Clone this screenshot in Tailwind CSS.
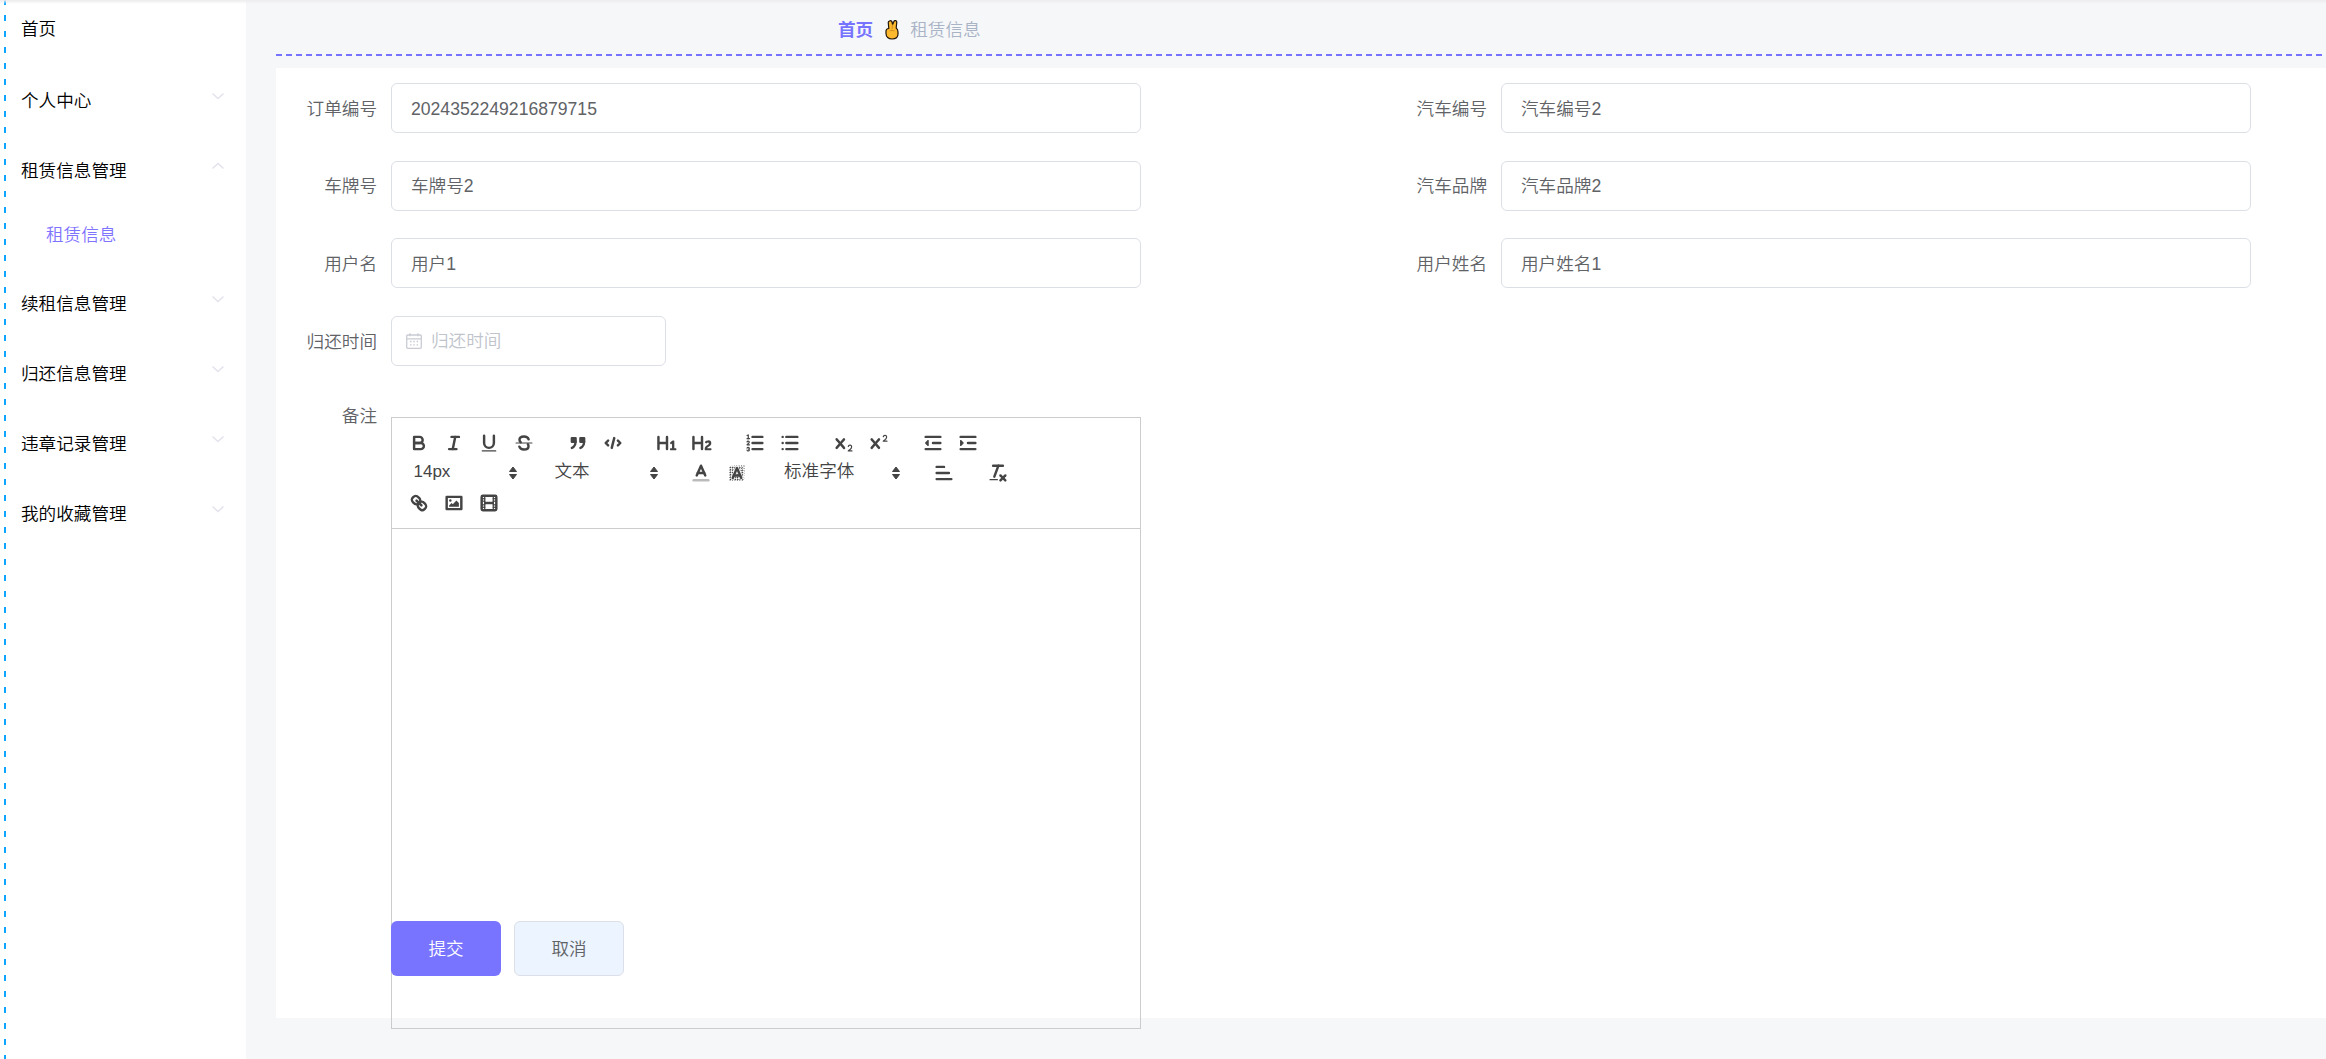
<!DOCTYPE html>
<html lang="zh-CN">
<head>
<meta charset="utf-8">
<title>租赁信息</title>
<script src="https://cdn.jsdelivr.net/npm/@tailwindcss/browser@4"></script>
</head>
<body class="m-0 overflow-hidden bg-[#f6f7f9] font-['Liberation_Sans','Noto_Sans_CJK_SC',sans-serif] text-[17.6px] font-[350]">
<div class="relative flex h-[1059px] w-[2326px] overflow-hidden">
  <div class="absolute inset-x-0 top-0 z-20 h-[4px] bg-linear-to-b from-[#ececee] to-transparent"></div>

  <!-- sidebar -->
  <aside class="relative h-full w-[246px] shrink-0 bg-white pl-[21px] text-black">
    <div class="absolute bottom-0 left-[4px] top-[-1px] w-[2px] bg-[repeating-linear-gradient(to_bottom,#0ea5ff_0,#0ea5ff_6px,transparent_6px,transparent_16px)]"></div>
    <div class="mb-[9px] flex h-[56px] items-center"><span class="pt-[2px]">首页</span></div>
    <div class="flex h-[70px] items-center justify-between pr-[21px]"><span class="pt-[2px]">个人中心</span>
      <svg class="-mt-[8px]" width="14" height="8" viewBox="0 0 14 8" fill="none" stroke="#e3e3ee" stroke-width="1.5"><path d="M1.5 1.5 7 6.5l5.500-5"/></svg></div>
    <div class="flex h-[70px] items-center justify-between pr-[21px]"><span class="pt-[2px]">租赁信息管理</span>
      <svg class="-mt-[8px]" width="14" height="8" viewBox="0 0 14 8" fill="none" stroke="#e3e3ee" stroke-width="1.5"><path d="M1.5 6.500 7 1.500l5.500 5"/></svg></div>
    <div class="mb-[5px] flex h-[58px] items-center pl-[25px] text-[#7f74ff]"><span class="pt-[2px]">租赁信息</span></div>
    <div class="flex h-[70px] items-center justify-between pr-[21px]"><span class="pt-[2px]">续租信息管理</span>
      <svg class="-mt-[8px]" width="14" height="8" viewBox="0 0 14 8" fill="none" stroke="#e3e3ee" stroke-width="1.5"><path d="M1.5 1.5 7 6.5l5.500-5"/></svg></div>
    <div class="flex h-[70px] items-center justify-between pr-[21px]"><span class="pt-[2px]">归还信息管理</span>
      <svg class="-mt-[8px]" width="14" height="8" viewBox="0 0 14 8" fill="none" stroke="#e3e3ee" stroke-width="1.5"><path d="M1.5 1.5 7 6.5l5.500-5"/></svg></div>
    <div class="flex h-[70px] items-center justify-between pr-[21px]"><span class="pt-[2px]">违章记录管理</span>
      <svg class="-mt-[8px]" width="14" height="8" viewBox="0 0 14 8" fill="none" stroke="#e3e3ee" stroke-width="1.5"><path d="M1.5 1.5 7 6.5l5.500-5"/></svg></div>
    <div class="flex h-[70px] items-center justify-between pr-[21px]"><span class="pt-[2px]">我的收藏管理</span>
      <svg class="-mt-[8px]" width="14" height="8" viewBox="0 0 14 8" fill="none" stroke="#e3e3ee" stroke-width="1.5"><path d="M1.5 1.5 7 6.5l5.500-5"/></svg></div>
  </aside>

  <!-- main -->
  <main class="flex h-full min-w-0 flex-1 flex-col pl-[30px]">
    <div class="h-[68px] shrink-0">
      <div class="flex h-[54px] items-center pl-[562px] pt-[6px]">
        <span class="font-bold text-[#7674ff]">首页</span>
        <svg class="ml-[12px] mr-[11px]" width="14" height="20" viewBox="0 0 14 20"><path d="M4.500 1C5.500.4 6.800.8 7 2L7.600 4.500 9 1.200C9.600.2 11.800.4 11.800 2L11.200 8C12.500 9 13 10 13 12V14C13 17.500 10.500 19 7 19 3.500 19 1 17 1 13.500V11C1 9.500 2 8.700 3.800 8.500L3.300 3C3.100 2 3.700 1.300 4.500 1Z" fill="#fdb92e" stroke="#20160a" stroke-width="1.200" stroke-linejoin="round"/><path d="M4.500 11c1.500-.8 3.500-.8 5 0M7.600 4.500 7 9" fill="none" stroke="#c98d1a" stroke-width="1"/></svg>
        <span class="text-[#a9b3c6]">租赁信息</span>
      </div>
      <div class="h-[2px] bg-[repeating-linear-gradient(to_right,#7674ff_0,#7674ff_6px,transparent_6px,transparent_10px)]"></div>
    </div>

    <section class="h-[950px] shrink-0 bg-white pt-[15px]">
      <form class="grid grid-cols-[1110px_1fr] gap-y-[27.67px] text-[#606266]">
        <div class="flex h-[50px] items-center"><label class="w-[101px] pt-[2px] text-right">订单编号</label>
          <div class="ml-[14px] flex h-[50px] w-[750px] items-center rounded-[6px] border border-[#dcdfe6] pl-[19px] pt-[2px]">2024352249216879715</div></div>
        <div class="flex h-[50px] items-center"><label class="w-[101px] pt-[2px] text-right">汽车编号</label>
          <div class="ml-[14px] flex h-[50px] w-[750px] items-center rounded-[6px] border border-[#dcdfe6] pl-[19px] pt-[2px]">汽车编号2</div></div>

        <div class="flex h-[50px] items-center"><label class="w-[101px] pt-[2px] text-right">车牌号</label>
          <div class="ml-[14px] flex h-[50px] w-[750px] items-center rounded-[6px] border border-[#dcdfe6] pl-[19px] pt-[2px]">车牌号2</div></div>
        <div class="flex h-[50px] items-center"><label class="w-[101px] pt-[2px] text-right">汽车品牌</label>
          <div class="ml-[14px] flex h-[50px] w-[750px] items-center rounded-[6px] border border-[#dcdfe6] pl-[19px] pt-[2px]">汽车品牌2</div></div>

        <div class="flex h-[50px] items-center"><label class="w-[101px] pt-[2px] text-right">用户名</label>
          <div class="ml-[14px] flex h-[50px] w-[750px] items-center rounded-[6px] border border-[#dcdfe6] pl-[19px] pt-[2px]">用户1</div></div>
        <div class="flex h-[50px] items-center"><label class="w-[101px] pt-[2px] text-right">用户姓名</label>
          <div class="ml-[14px] flex h-[50px] w-[750px] items-center rounded-[6px] border border-[#dcdfe6] pl-[19px] pt-[2px]">用户姓名1</div></div>

        <div class="col-span-2 flex h-[50px] items-center"><label class="w-[101px] pt-[2px] text-right">归还时间</label>
          <div class="ml-[14px] flex h-[50px] w-[275px] items-center rounded-[6px] border border-[#dcdfe6] pl-[13px] text-[#c0c4cc]">
            <svg class="mr-[8px]" width="18" height="18" viewBox="0 0 18 18" fill="none" stroke="#c9ccd4" stroke-width="1.300"><rect x="1.700" y="3" width="14.600" height="13.300" rx="1"/><path d="M1.700 6.800h14.600M5 1.200v3M13 1.200v3"/><path d="M5 9.500h1.500M8.300 9.500h1.500M11.600 9.500h1.500M5 12.800h1.500M8.300 12.800h1.500M11.600 12.800h1.500"/></svg>
            <span>归还时间</span>
          </div></div>

        <div class="col-span-2 flex h-[499.33px] items-start"><label class="flex h-[44px] w-[101px] items-center justify-end pt-[2px]">备注</label>
          <div class="ml-[14px] mt-[23px] flex h-[612px] w-[750px] shrink-0 flex-col border border-[#cccccc] text-[#444]">
            <div class="flex flex-wrap content-start border-b border-[#cccccc] pb-[10px] pl-[9.5px] pr-[10px] pt-[10px]">

              <div class="mr-[18.8px] flex h-[30px]">
                <div class="flex h-[30px] w-[35px] items-center justify-center"><svg width="22" height="22" viewBox="0 0 18 18" fill="none" stroke="#444" stroke-width="2" stroke-linecap="round" stroke-linejoin="round"><path d="M5,4H9.5A2.5,2.5,0,0,1,12,6.5v0A2.5,2.5,0,0,1,9.5,9H5V4Z"/><path d="M5,9h5.5A2.5,2.5,0,0,1,13,11.5v0A2.5,2.5,0,0,1,10.5,14H5V9Z"/></svg></div>
                <div class="flex h-[30px] w-[35px] items-center justify-center"><svg width="22" height="22" viewBox="0 0 18 18" fill="none" stroke="#444" stroke-width="2" stroke-linecap="round"><line x1="7" x2="13" y1="4" y2="4"/><line x1="5" x2="11" y1="14" y2="14"/><line x1="8" x2="10" y1="14" y2="4"/></svg></div>
                <div class="flex h-[30px] w-[35px] items-center justify-center"><svg width="22" height="22" viewBox="0 0 18 18" fill="none" stroke="#444" stroke-width="2" stroke-linecap="round"><path d="M5,3V9a4.012,4.012,0,0,0,4,4H9a4.012,4.012,0,0,0,4-4V3"/><rect x="3" y="15" width="12" height="1" rx=".5" fill="#444" stroke="none"/></svg></div>
                <div class="flex h-[30px] w-[35px] items-center justify-center"><svg width="22" height="22" viewBox="0 0 18 18" fill="none" stroke="#444" stroke-width="2" stroke-linecap="round"><path d="M12.800 6C12.300 4.500 10.900 3.700 9 3.700 7 3.700 5.300 4.700 5.300 6.400c0 .9.400 1.600 1 2"/><path d="M5.200 12c.5 1.500 1.900 2.300 3.800 2.300 2 0 3.700-1 3.700-2.700 0-.6-.2-1.100-.5-1.500"/><line x1="2.500" x2="15.500" y1="9" y2="9" stroke-width="1"/></svg></div>
              </div>

              <div class="mr-[18.8px] flex h-[30px]">
                <div class="flex h-[30px] w-[35px] items-center justify-center"><svg width="22" height="22" viewBox="0 0 18 18" fill="#444" stroke="#444" stroke-width="2" stroke-linecap="round" stroke-linejoin="round"><rect x="4" y="5" width="3" height="3"/><rect x="11" y="5" width="3" height="3"/><path d="M7,8c0,4.031-3,5-3,5" fill="none"/><path d="M14,8c0,4.031-3,5-3,5" fill="none"/></svg></div>
                <div class="flex h-[30px] w-[35px] items-center justify-center"><svg width="22" height="22" viewBox="0 0 18 18" fill="none" stroke="#444" stroke-width="2" stroke-linecap="round" stroke-linejoin="round"><polyline points="5 7 3 9 5 11"/><polyline points="13 7 15 9 13 11"/><line x1="10" x2="8" y1="5" y2="13"/></svg></div>
              </div>

              <div class="mr-[18.8px] flex h-[30px]">
                <div class="flex h-[30px] w-[35px] items-center justify-center"><svg width="22" height="22" viewBox="0 0 18 18" fill="#444"><path d="M10,4V14a1,1,0,0,1-2,0V10H3v4a1,1,0,0,1-2,0V4A1,1,0,0,1,3,4V8H8V4a1,1,0,0,1,2,0Zm6.06787,9.209H14.98975V7.59863a.54085.54085,0,0,0-.605-.60547h-.62744a1.01119,1.01119,0,0,0-.748.29688L11.645,8.56641a.5435.5435,0,0,0-.022.8584l.28613.30762a.53861.53861,0,0,0,.84717.0332l.09912-.08789a1.2137,1.2137,0,0,0,.2417-.35254h.02246s-.01123.30859-.01123.60547V13.209H12.041a.54085.54085,0,0,0-.605.60547v.43945a.54085.54085,0,0,0,.605.60547h4.02686a.54085.54085,0,0,0,.605-.60547v-.43945A.54085.54085,0,0,0,16.06787,13.209Z"/></svg></div>
                <div class="flex h-[30px] w-[35px] items-center justify-center"><svg width="22" height="22" viewBox="0 0 18 18" fill="#444"><path d="M16.73975,13.81445v.43945a.54085.54085,0,0,1-.605.60547H11.855a.58392.58392,0,0,1-.64893-.60547V14.0127c0-2.90527,3.39941-3.42187,3.39941-4.55469a.77675.77675,0,0,0-.84717-.78125,1.17684,1.17684,0,0,0-.83594.38477c-.2749.26367-.561.374-.85791.13184l-.4292-.34082c-.30811-.24219-.38525-.51758-.1543-.81445a2.97155,2.97155,0,0,1,2.45361-1.17676,2.45393,2.45393,0,0,1,2.68408,2.40918c0,2.45312-3.1792,2.92676-3.27832,3.93848h2.79443A.54085.54085,0,0,1,16.73975,13.81445ZM9,3A.99974.99974,0,0,0,8,4V8H3V4A1,1,0,0,0,1,4V14a1,1,0,0,0,2,0V10H8v4a1,1,0,0,0,2,0V4A.99974.99974,0,0,0,9,3Z"/></svg></div>
              </div>

              <div class="mr-[18.8px] flex h-[30px]">
                <div class="flex h-[30px] w-[35px] items-center justify-center"><svg width="22" height="22" viewBox="0 0 18 18" fill="none" stroke="#444" stroke-width="2" stroke-linecap="round" stroke-linejoin="round"><line x1="7" x2="15" y1="4" y2="4"/><line x1="7" x2="15" y1="9" y2="9"/><line x1="7" x2="15" y1="14" y2="14"/><line x1="2.500" x2="4.500" y1="5.500" y2="5.500" stroke-width="1"/><path d="M3.500,6A0.5,0.5,0,0,1,3,5.500V3.085l-0.276.138A0.5,0.5,0,0,1,2.053,3c-0.124-.247-0.023-0.324.224-0.447l1-.5A0.5,0.5,0,0,1,4,2.500v3A0.5,0.5,0,0,1,3.500,6Z" fill="#444" stroke="none"/><path d="M4.500,10.500h-2c0-.234,1.850-1.076,1.850-2.234A0.959,0.959,0,0,0,2.500,8.156" stroke-width="1"/><path d="M2.500,14.846a0.959,0.959,0,0,0,1.850-.109A0.7,0.7,0,0,0,3.750,14a0.688,0.688,0,0,0,.6-0.736,0.959,0.959,0,0,0-1.850-.109" stroke-width="1"/></svg></div>
                <div class="flex h-[30px] w-[35px] items-center justify-center"><svg width="22" height="22" viewBox="0 0 18 18" fill="none" stroke="#444" stroke-width="2" stroke-linecap="round"><line x1="6" x2="15" y1="4" y2="4"/><line x1="6" x2="15" y1="9" y2="9"/><line x1="6" x2="15" y1="14" y2="14"/><line x1="3" x2="3" y1="4" y2="4"/><line x1="3" x2="3" y1="9" y2="9"/><line x1="3" x2="3" y1="14" y2="14"/></svg></div>
              </div>

              <div class="mr-[18.8px] flex h-[30px]">
                <div class="flex h-[30px] w-[35px] items-center justify-center"><svg width="22" height="22" viewBox="0 0 18 18" fill="#444"><path d="M15.5,15H13.861a3.858,3.858,0,0,0,1.914-2.975,1.8,1.8,0,0,0-1.6-1.751A1.921,1.921,0,0,0,12.021,11.7a0.50013,0.50013,0,1,0,.957.291h0a0.914,0.914,0,0,1,1.053-.725,0.81,0.81,0,0,1,.744.762c0,1.076-1.16971,1.86982-1.93971,2.43082A1.45639,1.45639,0,0,0,12,15.5a0.5,0.5,0,0,0,.5.5h3A0.5,0.5,0,0,0,15.5,15Z"/><path d="M9.65,5.241a1,1,0,0,0-1.409.108L6,7.964,3.759,5.349A1,1,0,0,0,2.192,6.59178Q2.21541,6.6213,2.241,6.649L4.684,9.5,2.241,12.35A1,1,0,0,0,3.71,13.70722q0.02557-.02768.049-0.05722L6,11.036,8.241,13.65a1,1,0,1,0,1.567-1.24277Q9.78459,12.3777,9.759,12.35L7.316,9.5,9.759,6.651A1,1,0,0,0,9.65,5.241Z"/></svg></div>
                <div class="flex h-[30px] w-[35px] items-center justify-center"><svg width="22" height="22" viewBox="0 0 18 18" fill="#444"><path d="M15.5,7H13.861a4.015,4.015,0,0,0,1.914-2.975,1.8,1.8,0,0,0-1.6-1.751A1.922,1.922,0,0,0,12.021,3.7a0.5,0.5,0,1,0,.957.291,0.917,0.917,0,0,1,1.053-.725,0.81,0.81,0,0,1,.744.762c0,1.077-1.164,1.925-1.934,2.486A1.423,1.423,0,0,0,12,7.5a0.5,0.5,0,0,0,.5.5h3A0.5,0.5,0,0,0,15.5,7Z"/><path d="M9.651,5.241a1,1,0,0,0-1.41.108L6,7.964,3.759,5.349a1,1,0,1,0-1.519,1.3L4.683,9.5,2.241,12.35a1,1,0,1,0,1.519,1.3L6,11.036,8.241,13.65a1,1,0,0,0,1.519-1.3L7.317,9.5,9.759,6.651A1,1,0,0,0,9.651,5.241Z"/></svg></div>
              </div>

              <div class="mr-[25px] flex h-[30px]">
                <div class="flex h-[30px] w-[35px] items-center justify-center"><svg width="22" height="22" viewBox="0 0 18 18" fill="#444" stroke="#444" stroke-width="2" stroke-linecap="round" stroke-linejoin="round"><line x1="3" x2="15" y1="14" y2="14"/><line x1="3" x2="15" y1="4" y2="4"/><line x1="9" x2="15" y1="9" y2="9"/><polyline points="5 7 5 11 3 9 5 7" stroke-width="1"/></svg></div>
                <div class="flex h-[30px] w-[35px] items-center justify-center"><svg width="22" height="22" viewBox="0 0 18 18" fill="#444" stroke="#444" stroke-width="2" stroke-linecap="round" stroke-linejoin="round"><line x1="3" x2="15" y1="14" y2="14"/><line x1="3" x2="15" y1="4" y2="4"/><line x1="9" x2="15" y1="9" y2="9"/><polyline points="3 7 3 11 5 9 3 7" stroke-width="1"/></svg></div>
              </div>

              <div class="mr-[19px] flex h-[30px] w-[122px] items-center justify-between pl-[12px] pr-[3px] text-[17px]"><span class="-mt-[2px]">14px</span>
                <svg width="16" height="18" viewBox="0 0 16 18" fill="#444" stroke="#444" stroke-width="1" stroke-linejoin="round"><path d="M8 3 11.500 7.500h-7zM8 15 4.500 10.500h7z"/></svg></div>

              <div class="mr-[19px] flex h-[30px] w-[122px] items-center justify-between pl-[12px] pr-[3px]"><span class="-mt-[2px]">文本</span>
                <svg width="16" height="18" viewBox="0 0 16 18" fill="#444" stroke="#444" stroke-width="1" stroke-linejoin="round"><path d="M8 3 11.500 7.500h-7zM8 15 4.500 10.500h7z"/></svg></div>

              <div class="mr-[19px] flex h-[30px]">
                <div class="flex h-[30px] w-[35px] items-center justify-center"><svg width="22" height="22" viewBox="0 0 18 18" fill="none" stroke="#444" stroke-width="2" stroke-linecap="round" stroke-linejoin="round"><line x1="3" x2="15" y1="15" y2="15" stroke="#bbb"/><polyline points="5.500 11 9 3 12.500 11"/><line x1="11.630" x2="6.380" y1="9" y2="9"/></svg></div>
                <div class="flex h-[30px] w-[35px] items-center justify-center"><svg class="ml-[1px]" width="22" height="22" viewBox="0 0 18 18" fill="none" stroke="#444" stroke-linecap="round" stroke-linejoin="round"><path d="M3 5 5 3M3 7 7 3M3 9 9 3M3 11 11 3M3 13 13 3M3 15 15 3M5 15 15 5M7 15 15 7M9 15 15 9M11 15 15 11M13 15 15 13" stroke-width="1" stroke-dasharray="1.500 1.200" stroke-linecap="butt"/><polyline points="5.500 13 9 5 12.500 13" stroke="#fff" stroke-width="3"/><polyline points="5.500 13 9 5 12.500 13" stroke-width="2"/><line x1="11.630" x2="6.380" y1="11" y2="11" stroke-width="2"/></svg></div>
              </div>

              <div class="mr-[19px] flex h-[30px] w-[134.5px] items-center justify-between pl-[11.5px] pr-[3px]"><span class="-mt-[2px]">标准字体</span>
                <svg width="16" height="18" viewBox="0 0 16 18" fill="#444" stroke="#444" stroke-width="1" stroke-linejoin="round"><path d="M8 3 11.500 7.500h-7zM8 15 4.500 10.500h7z"/></svg></div>

              <div class="mr-[19px] flex h-[30px]">
                <div class="flex h-[30px] w-[35px] items-center justify-center"><svg width="22" height="22" viewBox="0 0 18 18" fill="none" stroke="#444" stroke-width="2" stroke-linecap="round"><line x1="3" x2="9" y1="4" y2="4"/><line x1="3" x2="13" y1="9" y2="9"/><line x1="3" x2="15" y1="14" y2="14"/></svg></div>
              </div>

              <div class="mr-[19px] flex h-[30px]">
                <div class="flex h-[30px] w-[35px] items-center justify-center"><svg width="22" height="22" viewBox="0 0 18 18" fill="none" stroke="#444" stroke-width="2" stroke-linecap="round"><line x1="5" x2="13" y1="3" y2="3"/><line x1="6" x2="9.350" y1="12" y2="3"/><line x1="11" x2="15" y1="11" y2="15"/><line x1="15" x2="11" y1="11" y2="15"/><rect x="2" y="14" width="7" height="1" rx=".5" fill="#444" stroke="none"/></svg></div>
              </div>

              <div class="mr-[19px] flex h-[30px]">
                <div class="flex h-[30px] w-[35px] items-center justify-center"><svg width="22" height="22" viewBox="0 0 18 18" fill="none" stroke="#444" stroke-width="2" stroke-linecap="round" stroke-linejoin="round"><line x1="7" x2="11" y1="7" y2="11"/><path d="M8.900,4.577a3.476,3.476,0,0,1,.36,4.679A3.476,3.476,0,0,1,4.577,8.900C3.185,7.500,2.035,6.400,4.217,4.217S7.500,3.185,8.900,4.577Z"/><path d="M13.423,9.100a3.476,3.476,0,0,0-4.679-.36,3.476,3.476,0,0,0,.36,4.679c1.392,1.392,2.500,2.542,4.679.36S14.815,10.500,13.423,9.100Z"/></svg></div>
                <div class="flex h-[30px] w-[35px] items-center justify-center"><svg width="22" height="22" viewBox="0 0 18 18" fill="none" stroke="#444" stroke-width="2" stroke-linecap="round" stroke-linejoin="round"><rect x="3" y="4" width="12" height="10"/><circle cx="6" cy="7" r="1" fill="#444" stroke="none"/><polyline points="5 12 5 11 7 9 8 10 11 7 13 9 13 12 5 12" fill="#444" stroke="none"/></svg></div>
                <div class="flex h-[30px] w-[35px] items-center justify-center"><svg width="22" height="22" viewBox="0 0 18 18" fill="#444"><rect x="3" y="3" width="12" height="12" rx="1" fill="none" stroke="#444" stroke-width="2"/><rect x="5" y="3" width="1" height="12"/><rect x="12" y="3" width="1" height="12"/><rect x="5" y="8" width="8" height="2"/><rect x="3" y="5" width="3" height="1"/><rect x="3" y="7" width="3" height="1"/><rect x="3" y="10" width="3" height="1"/><rect x="3" y="12" width="3" height="1"/><rect x="12" y="5" width="3" height="1"/><rect x="12" y="7" width="3" height="1"/><rect x="12" y="10" width="3" height="1"/><rect x="12" y="12" width="3" height="1"/></svg></div>
              </div>
            </div>
            <div class="flex-1"></div>
          </div></div>

        <div class="relative z-10 col-span-2 flex gap-[13px] pl-[115px]">
          <button type="button" class="h-[55px] w-[110px] rounded-[6px] bg-[#7874ff] pt-[2px] text-white">提交</button>
          <button type="button" class="h-[55px] w-[110px] rounded-[6px] border border-[#dcdfe6] bg-[#ecf5ff] pt-[2px] text-[#606266]">取消</button>
        </div>
      </form>
    </section>
  </main>
</div>
</body>
</html>
